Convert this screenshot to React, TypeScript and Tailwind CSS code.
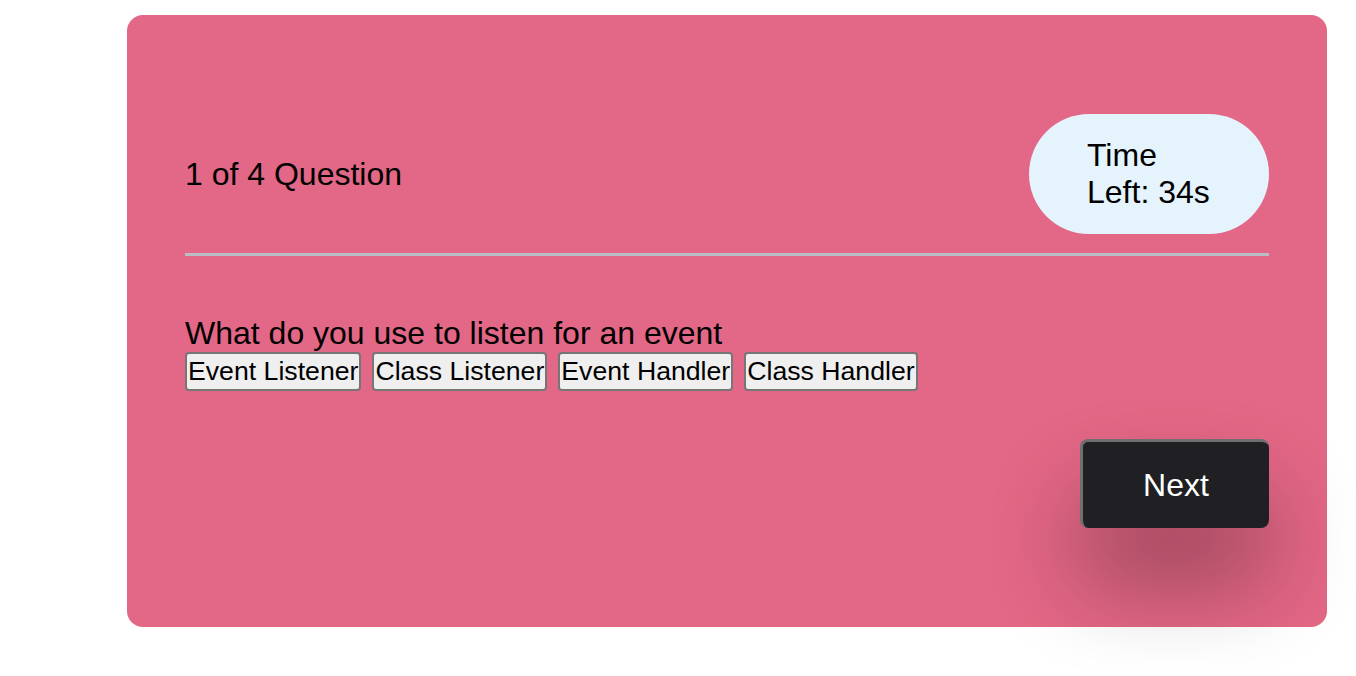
import React from "react";

const options = ["Event Listener", "Class Listener", "Event Handler", "Class Handler"];

const App = () => {
  return (
    <div className="min-h-screen bg-white pt-[15px] pl-[127px] font-['Liberation_Sans',Arial,sans-serif] text-black">
      <div className="w-[1200px] h-[612px] rounded-[16px] bg-[#e36786] px-[58px] pt-[99px]">
        <div className="flex items-center justify-between">
          <span className="text-[32px]">1 of 4 Question</span>
          <div className="w-[240px] rounded-full bg-[#e5f3fd] px-[58px] py-[23px] text-[32px] leading-[37px]">
            Time Left: 34s
          </div>
        </div>
        <div className="mt-[19px] h-[3px] bg-[#b9bdc8]" />
        <div className="mt-[59px] text-[32px] leading-[37px]">
          What do you use to listen for an event
        </div>
        <div className="flex gap-[11px]">
          {options.map((o) => (
            <button
              key={o}
              className="border-2 border-[#767676] bg-[#efefef] rounded-[4px] px-[1px] py-[2px] text-[26.67px] leading-[31px]"
            >
              {o}
            </button>
          ))}
        </div>
        <div className="mt-[48px] flex justify-end">
          <button className="w-[189px] h-[89px] rounded-[8px] bg-[#202024] border-t-[3px] border-l-[3px] border-[#6f6f6f] text-white text-[32px] shadow-[0_55px_90px_rgba(0,0,0,0.32)]">
            Next
          </button>
        </div>
      </div>
    </div>
  );
};

export default App;
